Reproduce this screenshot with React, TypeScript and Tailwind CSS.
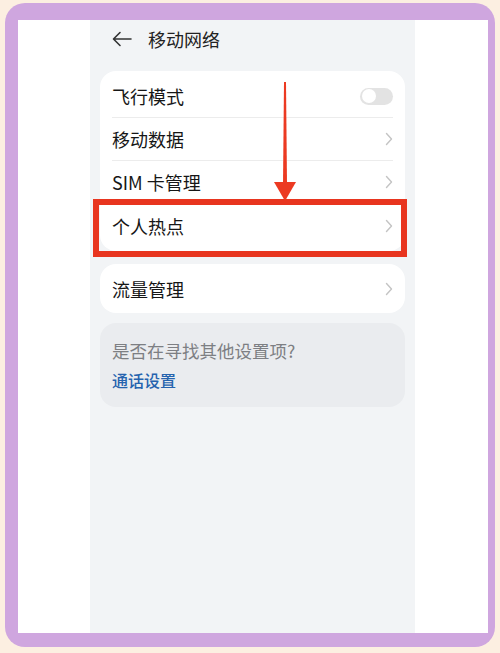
const rows = [
  { label: "飞行模式", toggle: true },
  { label: "移动数据" },
  { label: "SIM 卡管理" },
  { label: "个人热点" },
];

function Chevron() {
  return (
    <svg width="8" height="14" viewBox="0 0 8 14" fill="none" className="shrink-0">
      <path d="M1.5 1.5 L6.5 7 L1.5 12.5" stroke="#c4c4c4" strokeWidth="1.4" strokeLinecap="round" strokeLinejoin="round" />
    </svg>
  );
}

function Toggle() {
  return (
    <div className="flex h-[17px] w-[33px] items-center rounded-full bg-[#e3e3e3] px-[2px]">
      <div className="h-[14px] w-[14px] rounded-full bg-white" />
    </div>
  );
}

export default function App() {
  return (
    <div
      className="min-h-[653px] bg-[#fcefe1] pl-[5px] pt-[3px]"
      style={{ fontFamily: '"Noto Sans CJK SC", "Noto Sans", sans-serif' }}
    >
      <div className="h-[644px] w-[490px] rounded-[20px] bg-[#cfa6df] pb-[14px] pl-[13px] pr-[7px] pt-[17px]">
        <div className="flex h-full bg-white pl-[72px]">
          <div className="relative h-full w-[325px] bg-[#f2f4f6]">
            {/* header */}
            <div className="flex h-[51px] items-center pb-[14px] pl-[22px]">
              <svg width="20" height="16" viewBox="0 0 20 16" fill="none">
                <path d="M19 8 H2 M8 1.5 L1.5 8 L8 14.5" stroke="#333" strokeWidth="1.6" strokeLinecap="round" strokeLinejoin="round" />
              </svg>
              <span className="ml-[16px] text-[18px] leading-none text-[#222]">移动网络</span>
            </div>

            {/* card 1 */}
            <div className="relative mx-[10px] rounded-[16px] bg-white py-[4px]">
              {rows.map((r, i) => (
                <div key={r.label} className="px-[12px]">
                  <div
                    className={
                      "flex h-[43px] items-center justify-between " +
                      (i < rows.length - 1 ? "border-b border-[#ececec]" : "")
                    }
                  >
                    <span className="text-[18px] leading-none text-[#161616]">{r.label}</span>
                    {r.toggle ? <Toggle /> : <Chevron />}
                  </div>
                </div>
              ))}
              {/* highlight box */}
              <div className="absolute left-[-7px] top-[128px] h-[58px] w-[314px] border-[6px] border-[#e8351f]" />
            </div>

            {/* card 2 */}
            <div className="mx-[10px] mt-[13px] flex h-[49px] items-center justify-between rounded-[16px] bg-white px-[12px]">
              <span className="text-[18px] leading-none text-[#161616]">流量管理</span>
              <Chevron />
            </div>

            {/* card 3 */}
            <div className="mx-[10px] mt-[10px] h-[84px] rounded-[16px] bg-[#eaecef] px-[12px] pt-[19px]">
              <div className="text-[17.5px] leading-none text-[#7d7f83]">是否在寻找其他设置项?</div>
              <div className="mt-[12px] text-[16px] font-medium leading-none text-[#2563ae]">通话设置</div>
            </div>

            {/* red arrow overlay */}
            <svg className="absolute left-[180px] top-[60px]" width="30" height="122" viewBox="0 0 30 122" fill="none">
              <polygon points="14,2 16,2 17,104 13,104" fill="#ec3a22" />
              <polygon points="4,102 26,102 15,121" fill="#ec3a22" />
            </svg>
          </div>
        </div>
      </div>
    </div>
  );
}
